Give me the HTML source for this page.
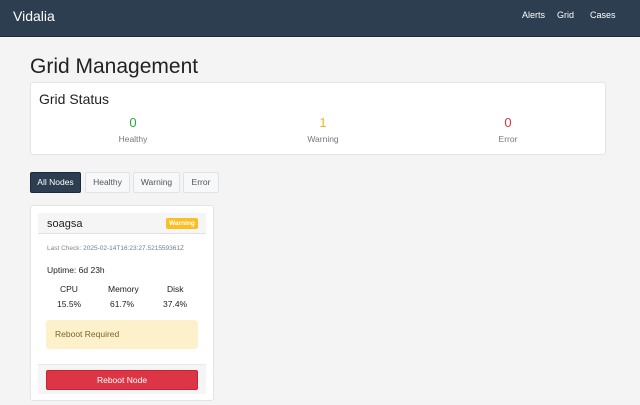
<!DOCTYPE html><html><head><style>
*{box-sizing:border-box;margin:0;padding:0}
body{width:640px;height:405px;overflow:hidden;background:#f4f4f4;font-family:"Liberation Sans",sans-serif;position:relative}
.nav{position:absolute;left:0;top:0;width:640px;height:37px;background:#2c3e50;border-bottom:1px solid #1a2a40}
.nav .b{position:absolute;left:13px;top:8px;color:#fff;font-size:14px}
.nav a{position:absolute;top:10px;color:#fff;font-size:9px}
h1{position:absolute;left:30px;top:55px;font-size:21px;font-weight:normal;color:#222}
.card{position:absolute;background:#fff;border:1px solid #e4e4e4;border-radius:3px}
.st{position:absolute;text-align:center;width:100px}
.st .n{font-size:13px}
.st .l{font-size:8.5px;color:#777;margin-top:4px}
.btn{position:absolute;top:172px;height:21px;font-size:8.5px;line-height:19px;text-align:center;border:1px solid #e2e2e2;background:#f7f8fa;color:#555;border-radius:2px}
.t{position:absolute;font-size:8.5px;color:#222}
</style></head><body>
<div class="nav"><div class="b">Vidalia</div><a style="left:522px">Alerts</a><a style="left:557px">Grid</a><a style="left:590px">Cases</a></div>
<h1>Grid Management</h1>
<div class="card" style="left:30px;top:82px;width:576px;height:73px">
<div style="position:absolute;left:8px;top:8px;font-size:14px;color:#222">Grid Status</div>
<div class="st" style="left:52px;top:32px"><div class="n" style="color:#28a745">0</div><div class="l">Healthy</div></div>
<div class="st" style="left:242px;top:32px"><div class="n" style="color:#f0b429">1</div><div class="l">Warning</div></div>
<div class="st" style="left:427px;top:32px"><div class="n" style="color:#dc3545">0</div><div class="l">Error</div></div>
</div>
<div class="btn" style="left:30px;width:51px;background:#2c3e50;color:#fff;border-color:#1a2a40">All Nodes</div>
<div class="btn" style="left:85px;width:45px">Healthy</div>
<div class="btn" style="left:133px;width:47px">Warning</div>
<div class="btn" style="left:183px;width:36px">Error</div>
<div class="card" style="left:30px;top:205px;width:184px;height:196px">
<div style="position:absolute;left:7px;top:7px;width:168px;height:21px;background:#f5f5f5;border-bottom:1px solid #e2e2e2"></div>
<div class="t" style="left:16px;top:12px;font-size:11px">soagsa</div>
<div style="position:absolute;left:135px;top:12px;width:32px;height:11px;background:#fbbf24;color:#fff;font-size:6.5px;font-weight:bold;text-align:center;line-height:11px;border-radius:2px">Warning</div>
<div class="t" style="left:16px;top:39px;font-size:6.5px;color:#888">Last Check: <span style="color:#6a7f95">2025-02-14T16:23:27.521559361Z</span></div>
<div class="t" style="left:16px;top:59px">Uptime: 6d 23h</div>
<div class="t" style="left:29px;top:78px">CPU</div><div class="t" style="left:77px;top:78px">Memory</div><div class="t" style="left:136px;top:78px">Disk</div>
<div class="t" style="left:26px;top:93px">15.5%</div><div class="t" style="left:79px;top:93px">61.7%</div><div class="t" style="left:132px;top:93px">37.4%</div>
<div style="position:absolute;left:15px;top:114px;width:152px;height:29px;background:#fdf1cc;border-radius:3px"></div>
<div class="t" style="left:24px;top:123px;color:#7a6530">Reboot Required</div>
<div style="position:absolute;left:7px;top:158px;width:168px;height:30px;background:#f5f5f5;border-top:1px solid #e8e8e8"></div>
<div style="position:absolute;left:15px;top:164px;width:152px;height:20px;background:#dc3545;border:1px solid #c82333;border-radius:2px;color:#fff;font-size:8.5px;text-align:center;line-height:18px">Reboot Node</div>
</div>
</body></html>
